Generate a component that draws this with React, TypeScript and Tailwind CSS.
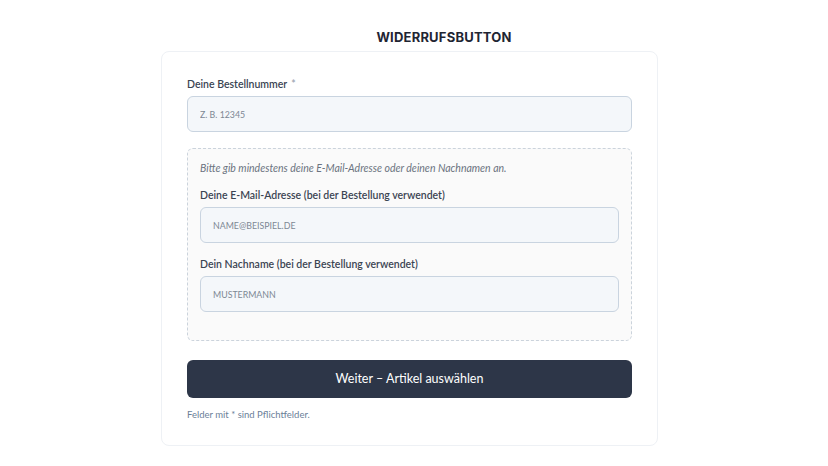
import React from 'react'

const Field: React.FC<{ label: string; placeholder: string; required?: boolean }> = ({
  label,
  placeholder,
  required,
}) => (
  <div className="flex flex-col">
    <label className="mb-[5px] text-[10.5px] font-semibold leading-[14px] text-[#3a4452]">
      {label}
      {required && <span className="ml-1 text-[#9aa3b0]">*</span>}
    </label>
    <input
      className="h-[36px] w-full rounded-[6px] border border-[#c9d4e0] bg-[#f4f7fa] px-3 text-[8.8px] text-[#3a4452] outline-none placeholder:text-[#7d8794]"
      placeholder={placeholder}
    />
  </div>
)

const App: React.FC = () => {
  return (
    <div className="min-h-[466px] bg-white font-['Lato','Liberation_Sans',sans-serif]">
      <div className="flex flex-col items-center pt-[29px]">
        <h1 className="pl-[60px] font-['Inter',sans-serif] text-[13px] font-bold leading-[16px] tracking-[0.2px] text-[#1f2533]">
          WIDERRUFSBUTTON
        </h1>
        <form className="mr-[9px] mt-[6px] flex w-[497px] flex-col rounded-[8px] border border-[#eef1f5] bg-white px-[25px] pb-[24px] pt-[25px]">
          <Field label="Deine Bestellnummer" placeholder="Z. B. 12345" required />

          <div className="mt-[16px] flex flex-col rounded-[6px] border border-dashed border-[#cbd3dc] bg-[#fafafa] px-[12px] pb-[28px] pt-[12px]">
            <p className="text-[10.5px] italic leading-[14px] text-[#6b7380]">
              Bitte gib mindestens deine E-Mail-Adresse oder deinen Nachnamen an.
            </p>
            <div className="mt-[13px]">
              <Field label="Deine E-Mail-Adresse (bei der Bestellung verwendet)" placeholder="NAME@BEISPIEL.DE" />
            </div>
            <div className="mt-[14px]">
              <Field label="Dein Nachname (bei der Bestellung verwendet)" placeholder="MUSTERMANN" />
            </div>
          </div>

          <button
            type="button"
            className="mt-[19px] h-[38px] w-full rounded-[6px] bg-[#2d3648] text-[12.5px] text-white"
          >
            Weiter – Artikel auswählen
          </button>
          <p className="mt-[10px] text-[9.5px] leading-[13px] text-[#6b7f99]">
            Felder mit * sind Pflichtfelder.
          </p>
        </form>
      </div>
    </div>
  )
}

export default App
